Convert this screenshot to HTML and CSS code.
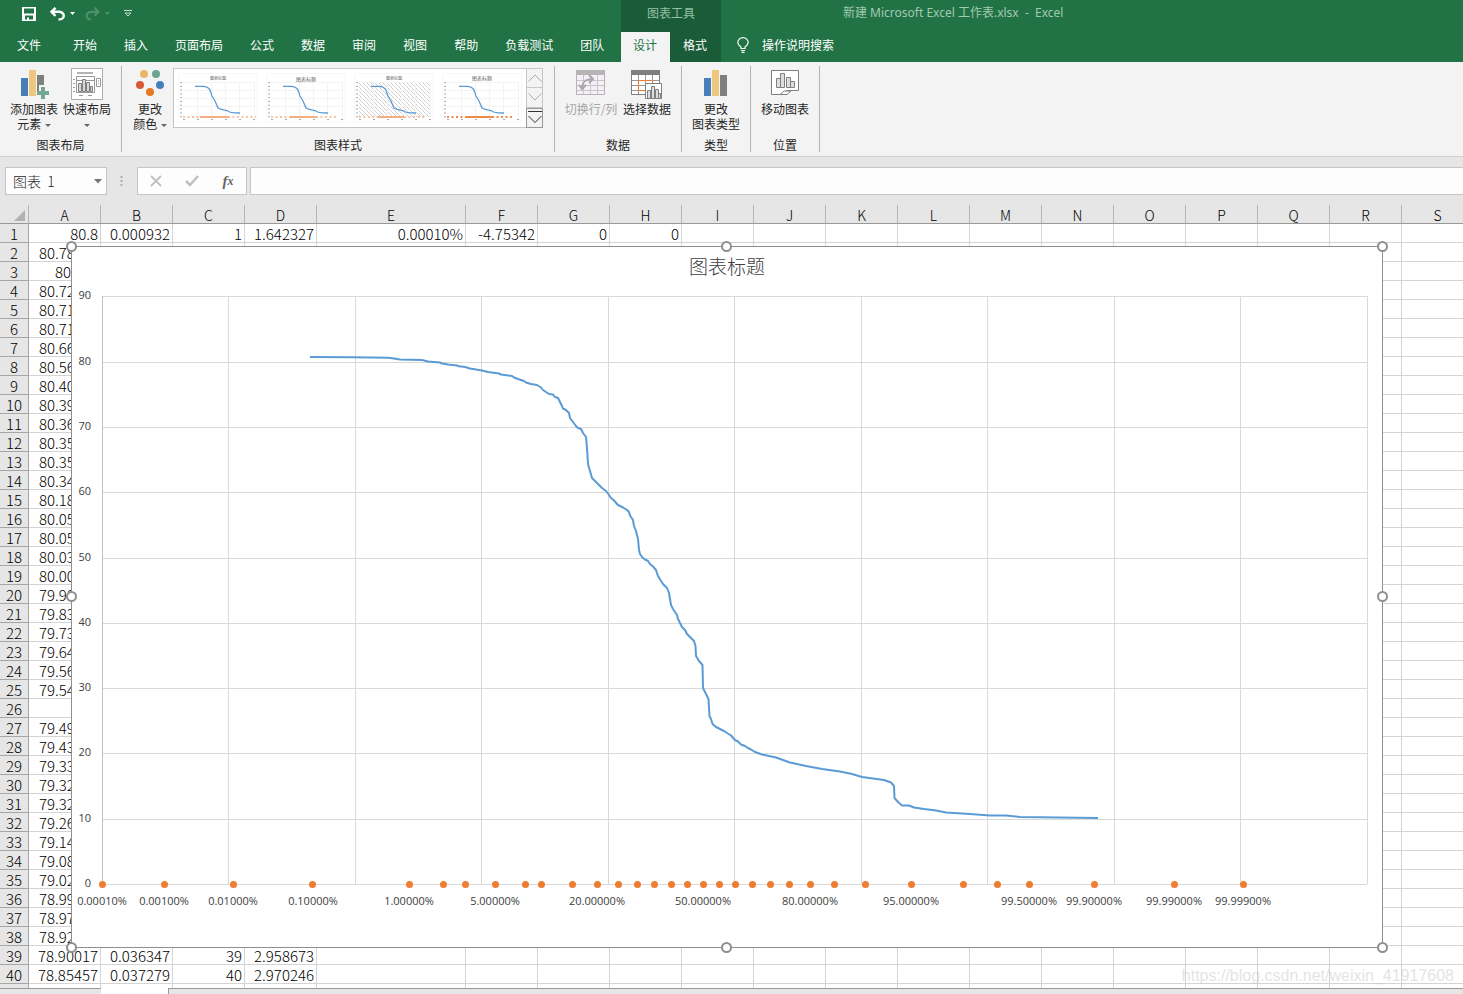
FILE: index.html
```html
<!DOCTYPE html>
<html lang="zh-CN">
<head>
<meta charset="utf-8">
<title>新建 Microsoft Excel 工作表.xlsx - Excel</title>
<link rel="stylesheet" href="styles.css">
</head>
<body>
<div class="app">
  <header class="top">
    <div class="top-left">
      <div class="quick">
        <button class="qbtn" aria-label="保存"><svg width="14" height="14" viewBox="0 0 14 14"><path fill="#fff" fill-rule="evenodd" d="M0 0H14V14H0ZM2 1.5V6.5H12V1.5ZM3 8.5V12.5H5V10.5H7V12.5H11V8.5Z"/></svg></button>
        <button class="qbtn undo" aria-label="撤消"><svg width="26" height="14" viewBox="0 0 26 14"><path d="M5.500 .8L1.500 4.800L5.500 8.800M2 4.800H8.500C15.500 4.800 15.500 12.500 8.500 12.500" fill="none" stroke="#fff" stroke-width="2.400"/><path d="M20 5h5l-2.500 3z" fill="#fff"/></svg></button>
        <button class="qbtn redo" aria-label="恢复"><svg width="26" height="14" viewBox="0 0 26 14"><path d="M9.500 .8L13.500 4.800L9.500 8.800M13 4.800H7C0 4.800 0 12.500 6 12.500" fill="none" stroke="#4f9069" stroke-width="2.200"/><path d="M20 5h5l-2.500 3z" fill="#4f9069"/></svg></button>
        <button class="qbtn more" aria-label="自定义快速访问工具栏"><svg width="8" height="8" viewBox="0 0 8 8"><path d="M0 .5H8M1 3l3 3 3-3z" fill="none" stroke="#c3dccd"/></svg></button>
      </div>
      <nav class="tabs">
        <button class="tab file">文件</button><button class="tab">开始</button><button class="tab">插入</button><button class="tab">页面布局</button><button class="tab">公式</button><button class="tab">数据</button><button class="tab">审阅</button><button class="tab">视图</button><button class="tab">帮助</button><button class="tab">负载测试</button><button class="tab">团队</button>
      </nav>
    </div>
    <div class="top-context">
      <div class="context-title">图表工具</div>
      <nav class="tabs"><button class="ctab active">设计</button><button class="ctab">格式</button></nav>
    </div>
    <div class="top-right">
      <div class="doc-title">新建 Microsoft Excel 工作表.xlsx&nbsp; -&nbsp; Excel</div>
      <button class="tell"><svg width="12" height="16" viewBox="0 0 12 16"><path d="M4 11.500V10C2 8.500 .8 7.500 .8 5.500a5.200 4.800 0 0 1 10.400 0C11.200 7.500 10 8.500 8 10v1.500zM4 13.500h4M4.500 15.400h3" fill="none" stroke="#fff" stroke-width="1.200"/></svg>操作说明搜索</button>
    </div>
  </header>

  <section class="ribbon">
    <div class="group g-layout">
      <div class="tools">
        <button class="tool w56"><svg width="30" height="32" viewBox="0 0 30 32"><path fill="#4a7ebb" d="M2 10h7v18H2z"/><path fill="#edc77d" d="M10 2h7v26h-7z"/><path fill="#7f7f7f" d="M18 7h7v16h-7z"/><path fill="#f3f3f3" d="M20 17h8v15h-8z"/><path fill="#72a893" d="M22 19h4v4h4v4h-4v4h-4v-4h-4v-4h4z"/></svg><span>添加图表<br>元素 <i class="caret"></i></span></button>
        <button class="tool w50"><svg width="32" height="32" viewBox="0 0 32 32"><path fill="#fff" stroke="#ababab" d="M.5 .5h31v31H.5z"/><path fill="#b3b3b3" d="M6 4h16v2H6z"/><path fill="none" stroke="#999" d="M5.500 8.500h18v16h-18zM25.500 10.500h4v8h-4zM2 11.500h2M2 15.500h2M2 19.500h2M2 23.500h2M8 27.500h4M17 27.500h4M6 12.500h17M27 13h1M27 16h1"/><path fill="#d9d9d9" stroke="#7f7f7f" d="M7.500 15.500h3v8h-3zM11.500 11.500h3v12h-3zM15.500 14.500h3v9h-3zM19.500 18.500h2v5h-2z"/></svg><span>快速布局<br><i class="caret"></i></span></button>
      </div>
      <div class="group-label">图表布局</div>
    </div>
    <div class="group g-style">
      <div class="tools">
        <button class="tool w46"><svg width="30" height="32" viewBox="0 0 30 32"><circle cx="9" cy="6" r="4" fill="#ecb66a"/><circle cx="21" cy="6" r="4" fill="#6ba592"/><circle cx="5" cy="17" r="4" fill="#d95735"/><circle cx="25" cy="17" r="4" fill="#4a7ebb"/><circle cx="15" cy="24" r="4" fill="#e57a20"/></svg><span>更改<br>颜色 <i class="caret"></i></span></button>
        <div class="gallery">
          <svg class="thumbs" width="353" height="58" viewBox="174 69 353 58">
            <defs>
              <pattern id="hatch" width="4" height="4" patternUnits="userSpaceOnUse"><path d="M-1 -1L5 5M3 -1L5 1M-1 3L1 5" stroke="#bdbdbd" stroke-width=".7"/></pattern>
              <g id="thumb">
                <path d="M178.500 73.500h79v48h-79z" fill="none" stroke="#f8f8f8"/>
                <path d="M183 82.500h71M183 90.500h71M183 98.500h71M183 106.500h71M197.500 82v35M211.500 82v35M225.500 82v35M239.500 82v35M254.500 82v35" stroke="#f3f3f3" fill="none"/>
                <path d="M181 82v36" stroke="#aaa" stroke-width="2" stroke-dasharray="1 2.800"/>
                <path d="M183 119.500h73" stroke="#aaa" stroke-dasharray="2 12"/>
                <path d="M195 86.300H203C208 86.500 209 88 210 90L212 96L215 101L218 108C221 110 226 110 228 111C229 113 234 113 240 113" fill="none" stroke="#5b9bd5" stroke-width="1.300"/>
              </g>
            </defs>
            <use href="#thumb"/><use href="#thumb" x="88"/><path d="M359 83h72v34h-72z" fill="url(#hatch)"/><use href="#thumb" x="176"/><use href="#thumb" x="264"/>
            <g class="thumb-title"><text x="218" y="80" font-size="4">图表标题</text><text x="306" y="81" font-size="5">图表标题</text><text x="394" y="80" font-size="4">图表标题</text><text x="482" y="80" font-size="5">图表标题</text></g>
            <g stroke="#f7c3a0" stroke-width="2"><path d="M183 117h73M271 117h65M359 117h66" stroke-dasharray="2 2.500"/><path d="M200 117h28M290 117h26M378 117h26" stroke="#f2ae80"/></g>
            <path d="M447 117h66" stroke="#ed8a45" stroke-width="2" stroke-dasharray="2 2.500"/><path d="M466 117h27" stroke="#ed8a45" stroke-width="2"/>
          </svg>
          <div class="scroller">
            <button aria-label="上一行"><svg width="14" height="8" viewBox="0 0 14 8"><path d="M.5 7.500L7 1l6.500 6.500" fill="none" stroke="#ababab"/></svg></button>
            <button aria-label="下一行"><svg width="14" height="8" viewBox="0 0 14 8"><path d="M.5 .5L7 7l6.500-6.500" fill="none" stroke="#ababab"/></svg></button>
            <button class="expand" aria-label="其他"><svg width="14" height="13" viewBox="0 0 14 13"><path d="M0 .5h14M.5 5L7 11.500 13.500 5" fill="none" stroke="#333"/></svg></button>
          </div>
        </div>
      </div>
      <div class="group-label">图表样式</div>
    </div>
    <div class="group g-data">
      <div class="tools">
        <button class="tool w56" disabled><svg width="30" height="32" viewBox="0 0 30 32"><path fill="#f5eff7" stroke="#b5b5b5" d="M.5 2.500h28v24H.5z"/><path fill="#b5b5b5" d="M0 2h29v5H0z"/><path fill="none" stroke="#c9c3cb" d="M1 12.500h27M1 17.500h27M1 22.500h27M7.500 7v19M14.500 7v19M21.500 7v19"/><path fill="none" stroke="#a8a8a8" stroke-width="2" d="M6 21C6 14 9 11 17 11M13 7l4 4-4 4M3 17l3 4 4-4"/></svg><span>切换行/列</span></button>
        <button class="tool w56"><svg width="32" height="32" viewBox="0 0 32 32"><path fill="#fff" stroke="#7f7f7f" d="M.5 2.500h28v24H.5z"/><path fill="#7f7f7f" d="M0 2h29v5H0z"/><path fill="none" stroke="#999" d="M1 12.500h27M1 17.500h27M1 22.500h27M7.500 7v19M14.500 7v19M21.500 7v19"/><path fill="none" stroke="#ed7d31" d="M7.500 12.500h14v10h-14z"/><path fill="#fff" stroke="#7f7f7f" d="M14.500 15.500h16v15h-16z"/><path fill="#ddd" stroke="#7f7f7f" d="M16.500 22.500h3v8h-3zM20.500 18.500h3v12h-3zM24.500 21.500h3v9h-3zM27.500 25.500h2v5h-2z"/></svg><span>选择数据</span></button>
      </div>
      <div class="group-label">数据</div>
    </div>
    <div class="group g-single">
      <div class="tools">
        <button class="tool w56"><svg width="24" height="32" viewBox="0 0 24 32"><path fill="#4a7ebb" d="M0 10h7v18H0z"/><path fill="#edc77d" d="M8 2h7v26H8z"/><path fill="#7f7f7f" d="M16 7h7v21h-7z"/></svg><span>更改<br>图表类型</span></button>
      </div>
      <div class="group-label">类型</div>
    </div>
    <div class="group g-single">
      <div class="tools">
        <button class="tool w56"><svg width="28" height="32" viewBox="0 0 28 32"><path fill="#fff" stroke="#7f7f7f" d="M.5 2.500h27v20H16l-5 4H.500z"/><path fill="#fff" stroke="#7f7f7f" d="M9 26.500l4-3.500h7l-4 3.500z"/><path fill="#ddd" stroke="#7f7f7f" d="M5.500 10.500h4v9h-4zM9.500 5.500h4v14h-4zM15.500 9.500h4v10h-4zM19.500 13.500h4v6h-4z"/></svg><span>移动图表</span></button>
      </div>
      <div class="group-label">位置</div>
    </div>
  </section>

  <section class="formula">
    <button class="name-box"><span>图表&nbsp; 1</span><svg width="8" height="5" viewBox="0 0 8 5"><path d="M0 0h8L4 4.500z" fill="#777"/></svg></button>
    <svg class="grip" width="3" height="12" viewBox="0 0 3 12"><path d="M.5 1h2v2h-2zM.5 5h2v2h-2zM.5 9h2v2h-2z" fill="#b0b0b0"/></svg>
    <div class="fx">
      <button aria-label="取消"><svg width="12" height="12" viewBox="0 0 12 12"><path d="M1 1l10 10M11 1L1 11" stroke="#c0c0c0" stroke-width="1.800"/></svg></button>
      <button aria-label="输入"><svg width="14" height="12" viewBox="0 0 14 12"><path d="M1 6l4 4L13 1" fill="none" stroke="#c0c0c0" stroke-width="2.500"/></svg></button>
      <button class="fx-label" aria-label="插入函数">f<sub>x</sub></button>
    </div>
    <input class="formula-input" aria-label="编辑栏" type="text">
  </section>

  <main class="sheet">
    <table class="grid" id="grid"></table>
    <svg class="chart" id="chart" width="1322" height="712" viewBox="66 241 1322 712" role="img" aria-label="图表标题">
      <path d="M71.500 246.500H1382.500V947.500H71.500Z" fill="#fff" stroke="#8f8f8f"/>
      <text class="chart-title" x="727" y="274">图表标题</text>
      <g id="plot"></g>
      <path class="curve" d="M310 357L352 357.200L388 357.800L394 358.500L400 359.500L422 360L428 361.500L440 362.500L442 363.500L448 364.500L457 365.500L459 366.200L465 367L470 368.500L482 370.500L488 372L499 373.500L501 374.500L512 376L514 377.500L518 379L524 381L526 382.500L531 384L537 385L541 387.500L543 390L546 392L549 394L553 394.500L555 397L558 398L560 402L562 406L563 408.500L566 410L569 413L570 418L573 422L576 426L578 428L581 429L583 433L586 437L587 448L588 464L590 471L592 478L595 481L599 485L602 488L606 491L608 493.500L611 498L614 500.500L618 505L623 507.500L627 510L629 512L630 515.500L633 520L634 526L636 531L638 539L639 550L640 554L642 557L645 559.500L648 561L650 564L653 566.500L656 570L658 576L661 581L663 584L667 588L669 593L671 605L673 609L677 615L678 619L680 623L682 627L685 630L687 634L691 638L694 641L695.500 646L696 656L699 661L702.500 665L703 688L706 694L708.500 699L709.500 716L711 719L712.500 724L716 727L719 728.500L724 731L731 735.500L735 740L738 741.500L741 744.500L745 746L748 748L751 749.500L755 752L762 754.500L776 757.500L790 762.500L806 766L822 769L840 771.500L852 774L862 777L884 780L891 782.500L894 786L894.500 798L898 802L902 805.500L909 805.500L914 807.500L924 809L936 810.500L946 812.500L970 814L990 815.500L1006 815.500L1020 817L1098 818"/>
      <g id="marks"></g>
      <g class="handle"><circle cx="71.500" cy="246.500" r="4.500"/><circle cx="726.500" cy="246.500" r="4.500"/><circle cx="1382.500" cy="246.500" r="4.500"/><circle cx="71.500" cy="596.500" r="4.500"/><circle cx="1382.500" cy="596.500" r="4.500"/><circle cx="71.500" cy="947.500" r="4.500"/><circle cx="726.500" cy="947.500" r="4.500"/><circle cx="1382.500" cy="947.500" r="4.500"/></g>
    </svg>
    <div class="watermark">https://blog.csdn.net/weixin_41917608</div>
  </main>
  <footer class="sheet-tabs"><div class="sheet-tab"></div></footer>
</div>
<script src="app.js"></script>
</body>
</html>
```
FILE: styles.css
```css
* { box-sizing: border-box; }
body {
  margin: 0;
  font: 12px/16px "Noto Sans CJK SC", sans-serif;
  color: #262626;
}
button { font: inherit; color: inherit; border: 0; background: none; padding: 0; }
svg { display: block; }
.app { display: flex; flex-direction: column; height: 100vh; overflow: hidden; background: #e6e6e6; }

.top { display: flex; background: #217346; color: #fff; }
.top-left { width: 621px; }
.quick { display: flex; align-items: center; height: 32px; padding: 0 0 4px 22px; }
.undo { margin-left: 14px; }
.redo { margin-left: 9px; }
.more { margin-left: 13px; }
.tabs { display: flex; height: 30px; }
.tab { padding: 0 14px 4px 13px; white-space: nowrap; }
.file { padding: 0 19px 4px 17px; }
.top-context { width: 100px; background: #1b5c38; }
.context-title { height: 32px; padding-top: 5px; text-align: center; color: #93c0a5; }
.ctab { padding: 0 13px 4px; }
.ctab.active { padding: 0 13px 4px 12px; background: #f3f3f3; color: #217346; }
.top-right { flex: 1; }
.doc-title { height: 32px; padding: 5px 0 0 122px; color: #a3cab2; font-family: "Noto Sans", "Noto Sans CJK SC", sans-serif; white-space: pre; }
.tell { display: flex; align-items: center; gap: 13px; height: 30px; padding: 0 0 4px 16px; }

.ribbon { display: flex; height: 95px; padding: 4px 0; background: #f3f3f3; border-bottom: 1px solid #d0d0d0; }
.group { display: flex; flex-direction: column; justify-content: space-between; border-right: 1px solid #b5b5b5; }
.g-layout { width: 122px; }
.g-layout .tools { padding-left: 6px; }
.g-style { width: 433px; }
.g-style .tools { padding-left: 5px; }
.g-data { width: 127px; }
.g-data .tools { padding-left: 8px; }
.g-single { width: 69px; }
.g-single .tools { justify-content: center; }
.tools { display: flex; align-items: flex-start; }
.tool { display: flex; flex-direction: column; align-items: center; gap: 1px; padding-top: 2px; line-height: 15px; white-space: nowrap; }
.tool:disabled { color: #a6a6a6; }
.w56 { width: 56px; }
.w50 { width: 50px; }
.w46 { width: 46px; }
.caret { display: inline-block; margin-left: 1px; border: 3px solid transparent; border-top-color: #666; border-bottom: 0; vertical-align: middle; }
.group-label { text-align: center; line-height: 15px; }
.gallery { display: flex; height: 60px; margin-top: 2px; background: #fff; border: 1px solid #c6c6c6; }
.scroller { display: flex; flex-direction: column; width: 17px; margin: -1px; border: 1px solid #c6c6c6; background: #f3f3f3; }
.scroller button { display: flex; flex: 1; align-items: center; justify-content: center; border-bottom: 1px solid #c6c6c6; }
.scroller .expand { border: 1px solid #999; margin: 0 -1px -1px; }

.formula { display: flex; align-items: center; height: 48px; padding: 0 0 0 5px; }
.name-box { display: flex; align-items: center; justify-content: space-between; width: 102px; height: 28px; padding: 0 4px 0 7px; background: #fdfdfd; border: 1px solid #c6c6c6; font-size: 14px; font-weight: 300; color: #262626; }
.grip { margin: 0 14px 0 13px; }
.fx { display: flex; width: 110px; height: 28px; background: #fdfdfd; border: 1px solid #c6c6c6; }
.fx button { display: flex; flex: 1; align-items: center; justify-content: center; }
.fx .fx-label { font: italic bold 15px "Liberation Serif", serif; color: #666; }
.fx-label sub { font-size: 12px; }
.formula-input { flex: 1; height: 28px; margin-left: 3px; background: #fdfdfd; border: 1px solid #c6c6c6; border-right: 0; }

.sheet { position: relative; flex: 1; overflow: hidden; background: #fff; }
.grid { width: 1474px; table-layout: fixed; border-collapse: separate; border-spacing: 0; font-size: 15px; line-height: 16px; color: #000; }
.grid th, .grid td { height: 19px; padding: 2px 2px 0 0; border: solid #d4d4d4; border-width: 0 1px 1px 0; font-weight: 300; overflow: hidden; white-space: nowrap; }
.grid td { text-align: right; }
.grid .covered { padding-left: 10px; text-align: left; }
.grid .short { padding-left: 26px; text-align: left; }
.grid th { padding: 2px 0 0; background: #e6e6e6; border-color: #a6a6a6; text-align: center; }
.grid thead th { font-size: 14px; border-right-color: #b5b5b5; border-bottom-color: #999; }
.corner svg { margin: 0 3px 0 auto; }
.chart { position: absolute; left: 66px; top: 36px; }
.chart text { font: 11px "Open Sans", sans-serif; fill: #404040; text-anchor: middle; }
.chart .y-label { fill: #404040; text-anchor: end; }
.chart .chart-title { font: 300 19px "Noto Sans CJK SC", sans-serif; fill: #404040; }
.gridline { stroke: #d9d9d9; }
.axis { stroke: #bfbfbf; }
.curve { fill: none; stroke: #5b9bd5; stroke-width: 2; stroke-linejoin: round; }
.dot { fill: #ed7d31; }
.handle { fill: #fff; stroke: #8f8f8f; stroke-width: 2; }
.thumb-title { fill: #666; text-anchor: middle; }
.watermark { position: absolute; right: 9px; bottom: 2px; font: 16px/20px "Liberation Sans", sans-serif; color: rgba(200, 200, 200, 0.5); }
.sheet-tabs { height: 6px; background: #e6e6e6; border-top: 1px solid #999; }
.sheet-tab { width: 68px; height: 6px; margin: -1px 0 0 101px; background: #fff; border-right: 1px solid #999; }
```
FILE: app.js
```js
const columns = [['A', 72], ['B', 72], ['C', 72], ['D', 72], ['E', 149], ['F', 72], ['G', 72], ['H', 72], ['I', 72], ['J', 72], ['K', 72], ['L', 72], ['M', 72], ['N', 72], ['O', 72], ['P', 72], ['Q', 72], ['R', 72], ['S', 72]];
const columnA = ['80.8', '80.78', '80', '80.72', '80.71', '80.71', '80.66', '80.56', '80.40', '80.39', '80.36', '80.35', '80.35', '80.34', '80.18', '80.05', '80.05', '80.03', '80.00', '79.98', '79.83', '79.73', '79.64', '79.56', '79.54', '', '79.49', '79.43', '79.33', '79.32', '79.32', '79.26', '79.14', '79.08', '79.02', '78.99', '78.97', '78.92', '78.90017', '78.85457', ''];
const details = {
  1: ['0.000932', '1', '1.642327', '0.00010%', '-4.75342', '0', '0'],
  39: ['0.036347', '39', '2.958673'],
  40: ['0.037279', '40', '2.970246']
};
const corner = '<svg width="11" height="11" viewBox="0 0 11 11"><path d="M11 0V11H0Z" fill="#b2b2b2"/></svg>';
let html = '<colgroup><col style="width:29px">' + columns.map(c => `<col style="width:${c[1]}px">`).join('') + '</colgroup>';
html += '<thead><tr><th class="corner">' + corner + '</th>' + columns.map(c => `<th>${c[0]}</th>`).join('') + '</tr></thead><tbody>';
columnA.forEach((a, i) => {
  const rest = details[i + 1] || [];
  const cls = a.length === 5 ? 'covered' : a.length === 2 ? 'short' : '';
  html += `<tr><th>${i < 40 ? i + 1 : ''}</th><td class="${cls}">${a}</td>` + columns.slice(1).map((c, j) => `<td>${rest[j] || ''}</td>`).join('') + '</tr>';
});
document.getElementById('grid').innerHTML = html + '</tbody>';

const xs = [228, 355, 481, 608, 734, 861, 987, 1114, 1240, 1367];
const ys = [296, 362, 427, 492, 558, 623, 688, 753, 819, 884];
let plot = '';
xs.forEach(x => { plot += `<path class="gridline" d="M${x + 0.5} 296V884"/>`; });
ys.forEach((y, i) => {
  plot += `<path class="gridline" d="M102 ${y + 0.5}H1367"/><text class="y-label" x="91" y="${y + 3}">${90 - i * 10}</text>`;
});
plot += '<path class="axis" d="M102.5 296V884"/>';
document.getElementById('plot').innerHTML = plot;

const dots = [102, 164, 233, 312, 409, 443, 465, 495, 525, 541, 572, 597, 618, 637, 654, 671, 687, 703, 719, 735, 752, 770, 789, 810, 834, 865, 911, 963, 997, 1029, 1094, 1174, 1243];
const labels = [[102, '0.00010%'], [164, '0.00100%'], [233, '0.01000%'], [313, '0.10000%'], [409, '1.00000%'], [495, '5.00000%'], [597, '20.00000%'], [703, '50.00000%'], [810, '80.00000%'], [911, '95.00000%'], [1029, '99.50000%'], [1094, '99.90000%'], [1174, '99.99000%'], [1243, '99.99900%']];
document.getElementById('marks').innerHTML =
  dots.map(x => `<circle class="dot" cx="${x + 0.5}" cy="884.5" r="3.5"/>`).join('') +
  labels.map(l => `<text x="${l[0]}" y="905">${l[1]}</text>`).join('');
```
